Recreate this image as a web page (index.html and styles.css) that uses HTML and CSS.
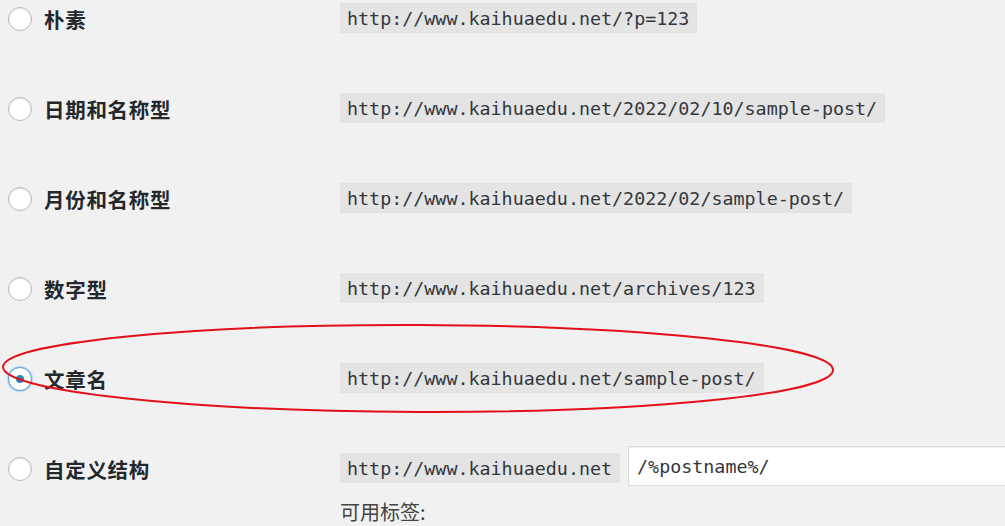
FILE: index.html
```html
<!DOCTYPE html>
<html lang="zh-CN">
<head>
<meta charset="utf-8">
<link rel="stylesheet" href="styles.css">
</head>
<body>
<div class="page">
  <div class="row">
    <label class="opt"><span class="radio"></span><span class="name">朴素</span></label>
    <code class="url">http://www.kaihuaedu.net/?p=123</code>
  </div>
  <div class="row">
    <label class="opt"><span class="radio"></span><span class="name">日期和名称型</span></label>
    <code class="url">http://www.kaihuaedu.net/2022/02/10/sample-post/</code>
  </div>
  <div class="row">
    <label class="opt"><span class="radio"></span><span class="name">月份和名称型</span></label>
    <code class="url">http://www.kaihuaedu.net/2022/02/sample-post/</code>
  </div>
  <div class="row">
    <label class="opt"><span class="radio"></span><span class="name">数字型</span></label>
    <code class="url">http://www.kaihuaedu.net/archives/123</code>
  </div>
  <div class="row">
    <label class="opt"><span class="radio checked"></span><span class="name">文章名</span></label>
    <code class="url">http://www.kaihuaedu.net/sample-post/</code>
  </div>
  <div class="row">
    <label class="opt"><span class="radio"></span><span class="name">自定义结构</span></label>
    <div class="custom">
      <div class="custom-fields">
        <code class="url base">http://www.kaihuaedu.net</code>
        <div class="input">/%postname%/</div>
      </div>
      <div class="tags">可用标签:</div>
    </div>
  </div>
  <svg class="mark" width="1005" height="526" viewBox="0 0 1005 526">
    <ellipse cx="418" cy="368.5" rx="415" ry="43.5" fill="none" stroke="#e2101a" stroke-width="2" transform="rotate(0.2 418 368.5)"/>
  </svg>
</div>
</body>
</html>
```
FILE: styles.css
```css
html, body {
  margin: 0;
  padding: 0;
  background: #f1f1f1;
  overflow: hidden;
}
.page {
  position: relative;
  width: 1005px;
  height: 526px;
  padding-top: 3px;
  box-sizing: border-box;
  overflow: hidden;
  font-family: "Noto Sans CJK SC", "Noto Sans", sans-serif;
  color: #23282d;
}
.row {
  display: flex;
  align-items: flex-start;
  height: 90px;
}
.opt {
  display: flex;
  align-items: center;
  width: 340px;
  height: 31px;
  flex: none;
}
.radio {
  width: 22px;
  height: 22px;
  margin-left: 8px;
  border: 1px solid #b4b9be;
  border-radius: 50%;
  background: #fff;
  box-shadow: inset 0 1px 2px rgba(0,0,0,.1);
  position: relative;
  flex: none;
}
.radio.checked {
  border-color: #5b9dd9;
  box-shadow: 0 0 2px rgba(30,140,190,.8);
}
.radio.checked::after {
  content: "";
  position: absolute;
  left: 7px;
  top: 7px;
  width: 8px;
  height: 8px;
  border-radius: 50%;
  background: #1e8cbe;
}
.name {
  margin-left: 12px;
  font-size: 20.5px;
  font-weight: bold;
  letter-spacing: 0.7px;
}
.url {
  display: block;
  height: 30px;
  line-height: 31px;
  padding: 0 8px 0 7px;
  background: #e4e4e4;
  font-family: "DejaVu Sans Mono", "Liberation Mono", monospace;
  font-size: 18.35px;
  color: #32373c;
  white-space: nowrap;
}
.custom {
  display: flex;
  flex-direction: column;
}
.custom-fields {
  display: flex;
  align-items: flex-start;
  gap: 8px;
  margin-top: -7px;
}
.custom-fields .base {
  margin-top: 7px;
}
.input {
  width: 380px;
  height: 38px;
  line-height: 39px;
  border: 1px solid #dcdcdc;
  background: #fff;
  box-shadow: inset 0 1px 2px rgba(0,0,0,.07);
  padding-left: 8px;
  font-family: "DejaVu Sans Mono", "Liberation Mono", monospace;
  font-size: 18.35px;
  color: #32373c;
  white-space: nowrap;
}
.tags {
  margin-top: 12px;
  font-size: 20px;
  line-height: 28px;
  color: #444;
}
.mark {
  position: absolute;
  left: 0;
  top: 0;
  pointer-events: none;
}
```
